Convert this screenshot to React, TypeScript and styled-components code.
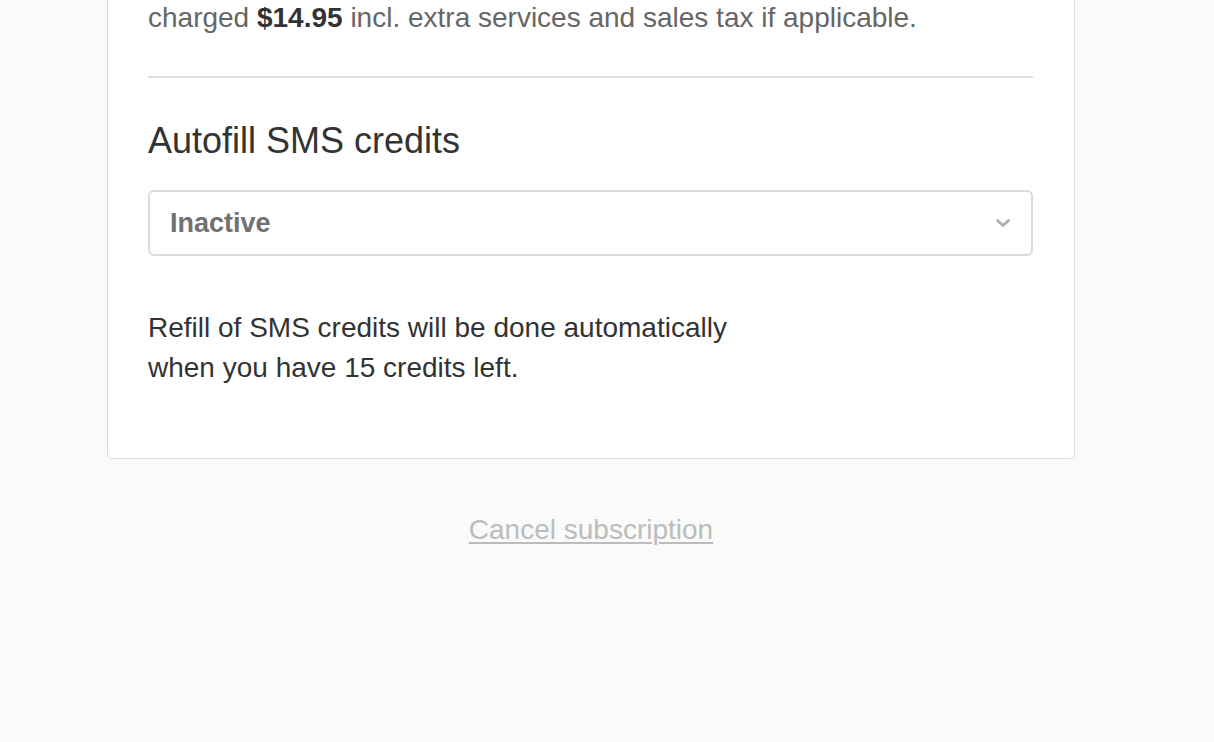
import styled, { createGlobalStyle } from "styled-components";

const GlobalStyle = createGlobalStyle`
  html, body {
    margin: 0;
    padding: 0;
    background: #fafafa;
    font-family: "Liberation Sans", Arial, Helvetica, sans-serif;
    -webkit-font-smoothing: antialiased;
  }
`;

const Page = styled.div`
  width: 968px;
  margin-left: 107px;
  min-height: 742px;
`;

const Card = styled.div`
  background: #fff;
  border: 1px solid #dcdcdc;
  border-top: none;
  border-radius: 0 0 5px 5px;
  padding: 0 41px 70px 40px;
`;

const Notice = styled.p`
  margin: -2px 0 0;
  font-size: 28px;
  line-height: 40px;
  color: #666;
  white-space: nowrap;

  strong {
    color: #333;
    font-weight: bold;
  }
`;

const Divider = styled.hr`
  margin: 38px 0 0;
  border: none;
  border-top: 2px solid #dedede;
`;

const Heading = styled.h2`
  margin: 43px 0 0;
  font-size: 36px;
  line-height: 40px;
  font-weight: normal;
  color: #333;
`;

const SelectBox = styled.div`
  margin-top: 29px;
  height: 62px;
  border: 2px solid #dcdcdc;
  border-radius: 6px;
  display: flex;
  align-items: center;
  justify-content: space-between;
  padding: 0 20px;
  font-size: 27px;
  font-weight: bold;
  color: #707070;
`;

const Chevron = styled.svg`
  width: 16px;
  height: 12px;
  color: #b0b0b0;
`;

const Help = styled.p`
  margin: 52px 0 0;
  font-size: 28px;
  line-height: 40px;
  color: #333;
`;

const Footer = styled.div`
  margin-top: 51px;
  text-align: center;
`;

const CancelLink = styled.a`
  font-size: 28px;
  line-height: 40px;
  color: #bcbcbc;
  text-decoration: underline;
  text-underline-offset: 3px;
  text-decoration-thickness: 2px;
`;

export default function App() {
  return (
    <>
      <GlobalStyle />
      <Page>
        <Card>
          <Notice>
            charged <strong>$14.95</strong> incl. extra services and sales tax if applicable.
          </Notice>
          <Divider />
          <Heading>Autofill SMS credits</Heading>
          <SelectBox>
            <span>Inactive</span>
            <Chevron viewBox="0 0 16 12" fill="none">
              <path d="M2.5 3.5 8 8.5l5.5-5" stroke="currentColor" strokeWidth="3" strokeLinecap="round" strokeLinejoin="round" />
            </Chevron>
          </SelectBox>
          <Help>
            Refill of SMS credits will be done automatically
            <br />
            when you have 15 credits left.
          </Help>
        </Card>
        <Footer>
          <CancelLink href="#">Cancel subscription</CancelLink>
        </Footer>
      </Page>
    </>
  );
}
